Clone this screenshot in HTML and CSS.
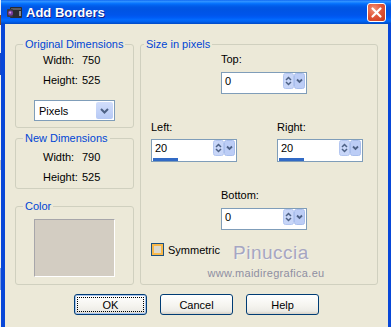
FILE: index.html
```html
<!DOCTYPE html>
<html>
<head>
    <title>Add Borders</title>
    <link rel="stylesheet" href="styles.css">
</head>
<body>
    <div class="screen">
        <div class="backdrop"></div>
        <div class="window">
            <div class="titlebar">
                <svg class="app-icon" width="16" height="13" viewBox="0 0 16 13">
                    <rect x="3" y="1" width="12" height="11" rx="1" fill="#2b2b2e"/>
                    <rect x="4" y="2" width="10" height="2" fill="#5a5a60"/>
                    <rect x="0" y="3" width="6" height="8" rx="1" fill="#3a3a40"/>
                    <circle cx="3.5" cy="7" r="2.6" fill="#7a3c9c"/>
                    <circle cx="3.2" cy="6.6" r="1.1" fill="#c9a0e0"/>
                    <rect x="12" y="5" width="2" height="5" fill="#8a8a90"/>
                </svg>
                <span class="title">Add Borders</span>
                <div class="close">
                    <svg width="19" height="19" viewBox="0 0 19 19">
                        <path d="M5.5 5.5 L13.5 13.5 M13.5 5.5 L5.5 13.5" stroke="#fff" stroke-width="2.2" stroke-linecap="round"/>
                    </svg>
                </div>
            </div>
            <div class="dialog">
                <div class="columns">
                    <div class="left-col">
                        <fieldset class="group group-orig">
                            <legend>Original Dimensions</legend>
                            <div class="dims">
                                <span>Width:</span><span>750</span>
                                <span>Height:</span><span>525</span>
                            </div>
                            <div class="select">
                                <span class="select-text">Pixels</span>
                                <span class="drop-btn">
                                    <svg width="17" height="17" viewBox="0 0 17 17">
                                        <path d="M5 7 L8.5 10.5 L12 7" stroke="#4d6185" stroke-width="2" fill="none"/>
                                    </svg>
                                </span>
                            </div>
                        </fieldset>
                        <fieldset class="group group-new">
                            <legend>New Dimensions</legend>
                            <div class="dims">
                                <span>Width:</span><span>790</span>
                                <span>Height:</span><span>525</span>
                            </div>
                        </fieldset>
                        <fieldset class="group group-color">
                            <legend>Color</legend>
                            <div class="swatch"></div>
                        </fieldset>
                    </div>

                    <fieldset class="group group-size">
                        <legend>Size in pixels</legend>
                        <div class="center-field">
                            <div class="field-label">Top:</div>
                            <div class="spin-box">
                                <div class="spin-row">
                                    <span class="spin-value">0</span>
                                    <svg class="spin" width="22" height="16" viewBox="0 0 22 16">
                                        <rect x="0.5" y="0.5" width="10" height="15" rx="2" fill="#c8d6f8" stroke="#b3c6f0"/>
                                        <path d="M3 7 L5.5 4.5 L8 7 M3 9 L5.5 11.5 L8 9" stroke="#4d6185" stroke-width="1.5" fill="none"/>
                                        <rect x="11.5" y="0.5" width="10" height="15" rx="2" fill="#bccdf6" stroke="#a9beec"/>
                                        <path d="M14 6.5 L16.5 9 L19 6.5" stroke="#4d6185" stroke-width="1.8" fill="none"/>
                                    </svg>
                                </div>
                            </div>
                        </div>

                        <div class="side-row">
                            <div class="side-field">
                                <div class="field-label">Left:</div>
                                <div class="spin-box with-slider">
                                    <div class="spin-row">
                                        <span class="spin-value">20</span>
                                        <svg class="spin" width="22" height="16" viewBox="0 0 22 16">
                                            <rect x="0.5" y="0.5" width="10" height="15" rx="2" fill="#c8d6f8" stroke="#b3c6f0"/>
                                            <path d="M3 7 L5.5 4.5 L8 7 M3 9 L5.5 11.5 L8 9" stroke="#4d6185" stroke-width="1.5" fill="none"/>
                                            <rect x="11.5" y="0.5" width="10" height="15" rx="2" fill="#bccdf6" stroke="#a9beec"/>
                                            <path d="M14 6.5 L16.5 9 L19 6.5" stroke="#4d6185" stroke-width="1.8" fill="none"/>
                                        </svg>
                                    </div>
                                    <div class="slider-bar"></div>
                                </div>
                            </div>
                            <div class="side-field">
                                <div class="field-label">Right:</div>
                                <div class="spin-box with-slider">
                                    <div class="spin-row">
                                        <span class="spin-value">20</span>
                                        <svg class="spin" width="22" height="16" viewBox="0 0 22 16">
                                            <rect x="0.5" y="0.5" width="10" height="15" rx="2" fill="#c8d6f8" stroke="#b3c6f0"/>
                                            <path d="M3 7 L5.5 4.5 L8 7 M3 9 L5.5 11.5 L8 9" stroke="#4d6185" stroke-width="1.5" fill="none"/>
                                            <rect x="11.5" y="0.5" width="10" height="15" rx="2" fill="#bccdf6" stroke="#a9beec"/>
                                            <path d="M14 6.5 L16.5 9 L19 6.5" stroke="#4d6185" stroke-width="1.8" fill="none"/>
                                        </svg>
                                    </div>
                                    <div class="slider-bar"></div>
                                </div>
                            </div>
                        </div>

                        <div class="center-field bottom-field">
                            <div class="field-label">Bottom:</div>
                            <div class="spin-box">
                                <div class="spin-row">
                                    <span class="spin-value">0</span>
                                    <svg class="spin" width="22" height="16" viewBox="0 0 22 16">
                                        <rect x="0.5" y="0.5" width="10" height="15" rx="2" fill="#c8d6f8" stroke="#b3c6f0"/>
                                        <path d="M3 7 L5.5 4.5 L8 7 M3 9 L5.5 11.5 L8 9" stroke="#4d6185" stroke-width="1.5" fill="none"/>
                                        <rect x="11.5" y="0.5" width="10" height="15" rx="2" fill="#bccdf6" stroke="#a9beec"/>
                                        <path d="M14 6.5 L16.5 9 L19 6.5" stroke="#4d6185" stroke-width="1.8" fill="none"/>
                                    </svg>
                                </div>
                            </div>
                        </div>

                        <label class="check">
                            <span class="check-box"></span>
                            <span>Symmetric</span>
                        </label>

                        <div class="watermark">
                            <div class="wm-name">Pinuccia</div>
                            <div class="wm-url">www.maidiregrafica.eu</div>
                        </div>
                    </fieldset>
                </div>

                <div class="buttons">
                    <button class="btn btn-default">OK</button>
                    <button class="btn">Cancel</button>
                    <button class="btn">Help</button>
                </div>
            </div>
        </div>
    </div>
</body>
</html>
```

FILE: styles.css
```css
body {
    margin: 0;
    font-family: "Liberation Sans", Arial, sans-serif;
    font-size: 11px;
    color: #000;
}
.screen {
    display: flex;
    width: 391px;
    height: 327px;
    overflow: hidden;
}
.backdrop {
    width: 3px;
    background: linear-gradient(to bottom,
        #e8eef8 0, #e8eef8 15px,
        #8a4a20 15px, #8a4a20 25px,
        #f4f3ee 25px, #f4f3ee 53px,
        #1848c8 53px, #1848c8 75px,
        #f4f3ee 75px, #f4f3ee 160px,
        #c0c0c0 160px, #c0c0c0 170px,
        #f4f3ee 170px, #f4f3ee 268px,
        #7d9ce0 268px, #7d9ce0 290px,
        #f4f3ee 290px);
}
.window {
    flex: 1;
    display: flex;
    flex-direction: column;
}
.titlebar {
    height: 24px;
    display: flex;
    align-items: center;
    padding-left: 6px;
    background: linear-gradient(to bottom, #0058ee 0%, #3593ff 4%, #288eff 8%, #127dff 12%, #036ffc 16%, #0262ee 22%, #0057e5 30%, #0054e3 40%, #0055eb 62%, #005bf5 72%, #026afe 82%, #0062ef 90%, #0052d6 96%, #0049c4 100%);
}
.app-icon {
    margin-right: 3px;
}
.title {
    flex: 1;
    color: #fff;
    font-weight: bold;
    font-size: 13px;
    text-shadow: 1px 1px 0 #0f1f89;
}
.close {
    width: 19px;
    height: 19px;
    margin-right: 5px;
    box-sizing: border-box;
    border: 1px solid #fff;
    border-radius: 3px;
    background: radial-gradient(circle at 35% 30%, #f0947a 0, #e2573a 45%, #c8381a 100%);
    display: flex;
    align-items: center;
    justify-content: center;
}
.close svg {
    margin: -1px;
}
.dialog {
    flex: 1;
    background: #ece9d8;
    border-left: 4px solid #0847d8;
    border-right: 3px solid #0847d8;
    padding: 14px 10px 0 10px;
}
.columns {
    display: flex;
    gap: 6px;
}
.left-col {
    width: 119px;
    display: flex;
    flex-direction: column;
}
.group {
    margin: 0;
    padding: 0;
    min-width: 0;
    box-sizing: border-box;
    border: 1px solid #d0d0bf;
    border-radius: 3px;
}
.group legend {
    color: #0046d5;
    line-height: 12px;
    padding: 0 2px;
    margin-left: 7px;
}
.group-orig {
    height: 90px;
}
.group-new {
    height: 57px;
    margin-top: 4px;
}
.group-color {
    height: 85px;
    margin-top: 11px;
}
.group-size {
    position: relative;
    width: 238px;
    height: 247px;
}
.group-size legend {
    margin-left: 3px;
}
.dims {
    display: grid;
    grid-template-columns: 39px auto;
    row-gap: 7px;
    line-height: 13px;
    margin: 4px 0 0 27px;
}
.group-new .dims {
    margin-top: 7px;
}
.select {
    display: flex;
    align-items: center;
    width: 81px;
    height: 21px;
    box-sizing: border-box;
    margin: 13px 0 0 18px;
    border: 1px solid #7f9db9;
    background: #fff;
    padding: 1px;
}
.select-text {
    flex: 1;
    padding-left: 3px;
}
.drop-btn {
    display: flex;
    width: 17px;
    height: 17px;
    background: linear-gradient(to bottom, #d2defb, #b6c9f5);
    border-radius: 2px;
}
.swatch {
    width: 81px;
    height: 58px;
    box-sizing: border-box;
    margin: 7px 0 0 18px;
    background: #d3cdc2;
    border: 1px solid #a7a6aa;
    border-right-color: #fff;
    border-bottom-color: #fff;
}
.field-label {
    line-height: 13px;
}
.center-field {
    margin: 3px 0 0 80px;
    width: 86px;
}
.center-field .spin-box {
    margin-top: 6px;
}
.bottom-field {
    margin-top: 27px;
}
.side-row {
    display: flex;
    gap: 40px;
    margin: 27px 0 0 10px;
}
.side-field .spin-box {
    margin-top: 5px;
}
.spin-box {
    width: 86px;
    height: 22px;
    box-sizing: border-box;
    border: 1px solid #7f9db9;
    background: #fff;
    padding: 0 1px 0 1px;
}
.spin-box.with-slider {
    height: 23px;
}
.spin-row {
    display: flex;
    align-items: center;
    height: 16px;
}
.spin-value {
    flex: 1;
    padding-left: 2px;
}
.slider-bar {
    width: 25px;
    height: 3px;
    margin-top: 2px;
    background: #316ac5;
}
.check {
    display: flex;
    align-items: center;
    gap: 4px;
    margin: 13px 0 0 10px;
}
.check-box {
    width: 13px;
    height: 13px;
    box-sizing: border-box;
    border: 1px solid #1c5180;
    background: #dcd9cc;
    box-shadow: inset 0 0 0 2px #f8b84a;
}
.watermark {
    position: absolute;
    left: 64px;
    top: 192px;
    width: 122px;
    text-align: center;
}
.wm-name {
    font-size: 19px;
    line-height: 22px;
    letter-spacing: 0.5px;
    color: #a6a6c2;
    text-shadow: 1px 1px 0 #f6f5ee;
    padding-left: 10px;
}
.wm-url {
    font-size: 11px;
    line-height: 12px;
    letter-spacing: 0.3px;
    color: #8f8fa2;
    margin-top: 3px;
}
.buttons {
    display: flex;
    gap: 13px;
    margin: 9px 0 0 59px;
}
.btn {
    width: 73px;
    height: 21px;
    padding: 0;
    font-family: "Liberation Sans", Arial, sans-serif;
    font-size: 11px;
    color: #000;
    border: 1px solid #003c74;
    border-radius: 3px;
    background: linear-gradient(to bottom, #ffffff 0%, #f4f3ee 60%, #ecebe6 85%, #d6d0c5 100%);
}
.btn-default {
    box-shadow: inset 0 0 0 1px #a8c4ee;
    outline: 1px dotted #000;
    outline-offset: -4px;
}
```
